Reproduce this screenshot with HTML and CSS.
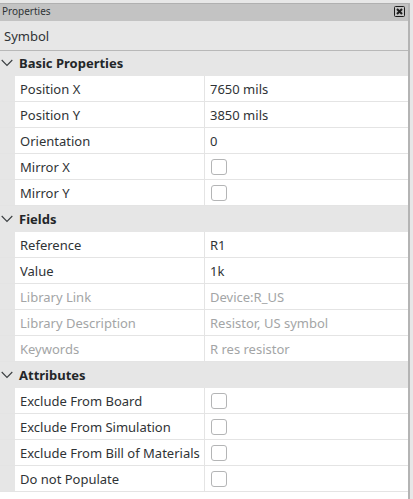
FILE: index.html
```html
<!DOCTYPE html>
<html lang="en">
<head>
    <meta charset="UTF-8">
    <meta name="viewport" content="width=device-width, initial-scale=1.0">
    <title>Properties</title>
    <link rel="stylesheet" href="styles.css">
</head>
<body>
    <div class="panel">
        <!-- Title Bar -->
        <div class="title-bar">
            <h1>Properties</h1>
            <button class="close-button" aria-label="Close">
                <svg width="11" height="11" viewBox="0 0 11 11">
                    <rect x="0.5" y="0.5" width="10" height="10" rx="1" fill="none" stroke="#1c1c1c"/>
                    <path d="M3 3L8 8M8 3L3 8" fill="none" stroke="#1c1c1c" stroke-width="2"/>
                </svg>
            </button>
        </div>

        <h2 class="item-type">Symbol</h2>

        <!-- Property Grid -->
        <table class="grid">
            <colgroup>
                <col class="col-gutter">
                <col class="col-name">
                <col>
            </colgroup>
            <tbody>
                <tr class="group">
                    <th colspan="3">
                        <button class="group-button" aria-expanded="true">
                            <svg width="12" height="8" viewBox="0 0 12 8"><path d="M0.7 1L6 6.4L11.3 1" fill="none" stroke="#3a3e41" stroke-width="1.1"/></svg>
                            Basic Properties
                        </button>
                    </th>
                </tr>
                <tr><td class="gutter"></td><th>Position X</th><td>7650 mils</td></tr>
                <tr><td class="gutter"></td><th>Position Y</th><td>3850 mils</td></tr>
                <tr><td class="gutter"></td><th>Orientation</th><td>0</td></tr>
                <tr><td class="gutter"></td><th><label for="mirror-x">Mirror X</label></th><td><input type="checkbox" id="mirror-x"></td></tr>
                <tr><td class="gutter"></td><th><label for="mirror-y">Mirror Y</label></th><td><input type="checkbox" id="mirror-y"></td></tr>
            </tbody>
            <tbody>
                <tr class="group">
                    <th colspan="3">
                        <button class="group-button" aria-expanded="true">
                            <svg width="12" height="8" viewBox="0 0 12 8"><path d="M0.7 1L6 6.4L11.3 1" fill="none" stroke="#3a3e41" stroke-width="1.1"/></svg>
                            Fields
                        </button>
                    </th>
                </tr>
                <tr><td class="gutter"></td><th>Reference</th><td>R1</td></tr>
                <tr><td class="gutter"></td><th>Value</th><td>1k</td></tr>
                <tr class="readonly"><td class="gutter"></td><th>Library Link</th><td>Device:R_US</td></tr>
                <tr class="readonly"><td class="gutter"></td><th>Library Description</th><td>Resistor, US symbol</td></tr>
                <tr class="readonly"><td class="gutter"></td><th>Keywords</th><td>R res resistor</td></tr>
            </tbody>
            <tbody>
                <tr class="group">
                    <th colspan="3">
                        <button class="group-button" aria-expanded="true">
                            <svg width="12" height="8" viewBox="0 0 12 8"><path d="M0.7 1L6 6.4L11.3 1" fill="none" stroke="#3a3e41" stroke-width="1.1"/></svg>
                            Attributes
                        </button>
                    </th>
                </tr>
                <tr><td class="gutter"></td><th><label for="no-board">Exclude From Board</label></th><td><input type="checkbox" id="no-board"></td></tr>
                <tr><td class="gutter"></td><th><label for="no-sim">Exclude From Simulation</label></th><td><input type="checkbox" id="no-sim"></td></tr>
                <tr><td class="gutter"></td><th><label for="no-bom">Exclude From Bill of Materials</label></th><td><input type="checkbox" id="no-bom"></td></tr>
                <tr><td class="gutter"></td><th><label for="dnp">Do not Populate</label></th><td><input type="checkbox" id="dnp"></td></tr>
            </tbody>
        </table>
    </div>
</body>
</html>
```
FILE: styles.css
```css
* {
    margin: 0;
    padding: 0;
    box-sizing: border-box;
}

body {
    background-color: #e7e7e7;
    min-height: 100vh;
    display: flex;
    padding: 3px 3px 0 0;
    font-family: "Noto Sans", sans-serif;
    font-size: 13px;
    color: #2f3336;
}

.panel {
    flex: 1;
    display: flex;
    flex-direction: column;
    border-right: 2px solid #b4b4b4;
}

/* Title Bar */
.title-bar {
    display: flex;
    align-items: center;
    justify-content: space-between;
    height: 18px;
    padding: 0 3px 2px 2px;
    background-color: #c3c3c3;
    border-top: 1px solid #b0b0b0;
}

.title-bar h1 {
    font-size: 10px;
    line-height: 15px;
    font-weight: normal;
}

.close-button {
    display: flex;
    border: none;
    background: none;
}

.item-type {
    height: 29px;
    padding-left: 4px;
    font-size: 13px;
    line-height: 30px;
    font-weight: normal;
}

/* Property Grid */
.grid {
    width: 100%;
    table-layout: fixed;
    border-collapse: separate;
    border-spacing: 0;
    background-color: #ffffff;
}

.panel::after {
    content: '';
    flex: 1;
    background-color: #ffffff;
}

.col-gutter {
    width: 15px;
}

.col-name {
    width: 190px;
}

.grid th,
.grid td {
    height: 26px;
    padding: 1px 0 0 5px;
    border-bottom: 1px solid #e4e4e4;
    font-weight: normal;
    line-height: 24px;
    text-align: left;
    vertical-align: middle;
    white-space: nowrap;
}

.grid th {
    border-right: 1px solid #e4e4e4;
}

.grid .gutter {
    padding: 0;
    background-color: #e6e6e6;
}

.grid .group th {
    padding: 0 0 1px;
    background-color: #e6e6e6;
    border: none;
    border-top: 1px solid #e6e6e6;
}

.grid tbody:first-of-type .group th {
    border-top-color: #b8b8b8;
}

.group-button {
    display: flex;
    align-items: center;
    gap: 6px;
    width: 100%;
    padding-left: 1px;
    border: none;
    background: none;
    font: bold 13px/24px "Noto Sans", sans-serif;
    color: #232629;
}

.readonly {
    color: #a3a5a6;
}

.grid input {
    appearance: none;
    display: block;
    width: 16px;
    height: 16px;
    margin-left: 1px;
    border: 1px solid #b4b5b6;
    border-radius: 3px;
    background-color: #ffffff;
}

.grid input:checked {
    background-color: #3daee9;
}
```
